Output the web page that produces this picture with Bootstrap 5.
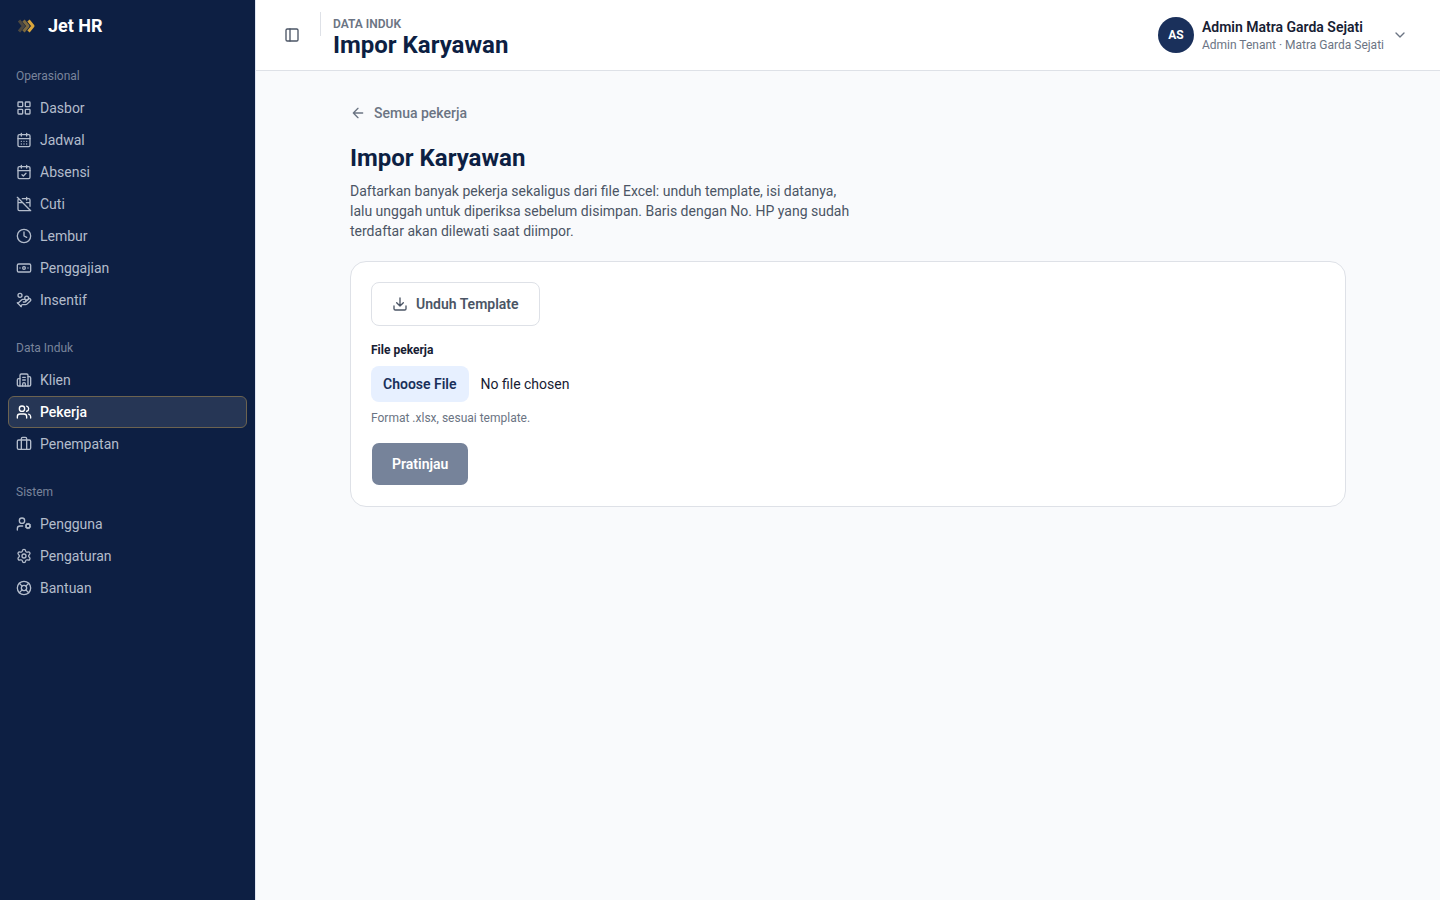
<!DOCTYPE html>
<html lang="id">
<head>
<meta charset="utf-8">
<meta name="viewport" content="width=device-width, initial-scale=1">
<title>Impor Karyawan · Jet HR</title>
<link href="https://cdn.jsdelivr.net/npm/bootstrap@5.3.0/dist/css/bootstrap.min.css" rel="stylesheet">
<style>
  :root {
    --navy: #0d1f43;
    --ink: #172033;
    --text: #4b5565;
    --muted: #6b7483;
    --line: #dee1e7;
  }
  body {
    font-family: Roboto, "Liberation Sans", sans-serif;
    font-size: 14px;
    line-height: 20px;
    color: var(--ink);
    background: #f9fafc;
  }
  a { text-decoration: none; }
  .ico {
    width: 16px;
    height: 16px;
    flex: none;
    fill: none;
    stroke: currentColor;
    stroke-width: 2;
    stroke-linecap: round;
    stroke-linejoin: round;
  }
  .text-12 { font-size: 12px; line-height: 16px; }
  .text-soft { color: var(--muted); }
  .page-title {
    font-size: 24px;
    line-height: 30px;
    font-weight: 700;
    color: var(--navy);
  }

  /* Sidebar */
  .sidebar {
    width: 256px;
    flex: none;
    background: var(--navy);
    border-right: 1px solid #dfe5f2;
  }
  .brand {
    height: 52px;
    padding: 0 16px;
    gap: 12px;
    font-size: 18px;
    font-weight: 700;
    color: #fff;
  }
  .brand svg { width: 20px; height: 20px; fill: none; stroke: #d9a63c; stroke-width: 3; stroke-linejoin: round; }
  .menu-group { padding: 8px; }
  .menu-title {
    height: 32px;
    padding: 0 8px;
    font-size: 12px;
    color: #79849b;
  }
  .menu-link {
    height: 32px;
    padding: 0 7px;
    gap: 8px;
    border: 1px solid transparent;
    border-radius: 6px;
    color: #b3bccb;
  }
  .menu-link:hover { color: #fff; }
  .menu-link.active {
    background: #263655;
    border-color: #6c6350;
    color: #fff;
    font-weight: 500;
  }

  /* Top bar */
  .topbar {
    min-height: 71px;
    padding: 12px 32px 12px 20px;
    background: #fff;
    border-bottom: 1px solid var(--line);
  }
  .toggle { width: 32px; height: 32px; color: var(--text); }
  .topbar-start { gap: 12px; }
  .rule { width: 1px; height: 24px; background: var(--line); }
  .eyebrow { font-size: 12px; line-height: 20px; font-weight: 600; color: var(--muted); }
  .topbar .page-title { line-height: 22px; }
  .avatar {
    width: 36px;
    height: 36px;
    background: #1a305b;
    color: #fff;
    font-size: 12px;
    font-weight: 700;
  }
  .account-name { font-size: 14px; line-height: 20px; font-weight: 600; color: var(--ink); }

  /* Content */
  .content { max-width: 1060px; padding: 32px; }
  .back-link { color: var(--muted); font-weight: 500; }
  .intro { max-width: 500px; margin-bottom: 20px; color: var(--text); }
  .content .page-title { margin: 20px 0 8px; }
  .panel {
    padding: 20px;
    gap: 16px;
    background: #fff;
    border: 1px solid var(--line);
    border-radius: 16px;
  }
  .btn-action {
    --bs-btn-padding-x: 20px;
    --bs-btn-padding-y: 11px;
    --bs-btn-font-size: 14px;
    --bs-btn-font-weight: 600;
    --bs-btn-line-height: 20px;
    --bs-btn-border-radius: 8px;
    background-clip: padding-box;
  }
  .btn-plain {
    --bs-btn-color: var(--text);
    --bs-btn-bg: #fff;
    --bs-btn-border-color: var(--line);
    --bs-btn-hover-color: var(--ink);
    --bs-btn-hover-bg: #f9fafc;
    --bs-btn-hover-border-color: var(--line);
  }
  .btn-navy {
    --bs-btn-disabled-color: #fff;
    --bs-btn-disabled-bg: #76839a;
    --bs-btn-disabled-border-color: transparent;
    --bs-btn-disabled-opacity: 1;
  }
  .picker { width: 100%; height: 36px; line-height: 36px; }
  .picker::file-selector-button {
    height: 36px;
    margin: 0 12px 0 0;
    padding: 0 12px;
    border: 0;
    border-radius: 8px;
    background: #e7f0ff;
    color: #1a305b;
    font-weight: 600;
  }
</style>
</head>
<body>
<div class="d-flex min-vh-100">
  <aside class="sidebar">
    <a href="#" class="brand d-flex align-items-center">
      <svg viewBox="0 0 20 20" aria-hidden="true">
        <path d="M3 4.500l4.500 5.500L3 15.500" opacity=".3"/>
        <path d="M7.500 4.500L12 10l-4.500 5.500" opacity=".55"/>
        <path d="M12.500 4.500L17 10l-4.500 5.500"/>
      </svg>
      <span>Jet HR</span>
    </a>
    <nav aria-label="Menu utama">
      <div class="menu-group">
        <div class="menu-title d-flex align-items-center">Operasional</div>
        <a href="#" class="menu-link d-flex align-items-center">
          <svg class="ico" viewBox="0 0 24 24"><rect width="7" height="7" x="3" y="3" rx="1"/><rect width="7" height="7" x="14" y="3" rx="1"/><rect width="7" height="7" x="14" y="14" rx="1"/><rect width="7" height="7" x="3" y="14" rx="1"/></svg>
          Dasbor</a>
        <a href="#" class="menu-link d-flex align-items-center">
          <svg class="ico" viewBox="0 0 24 24"><path d="M8 2v4M16 2v4"/><rect width="18" height="18" x="3" y="4" rx="2"/><path d="M3 10h18M8 14h.01M12 14h.01M16 14h.01M8 18h.01M12 18h.01M16 18h.01"/></svg>
          Jadwal</a>
        <a href="#" class="menu-link d-flex align-items-center">
          <svg class="ico" viewBox="0 0 24 24"><path d="M8 2v4M16 2v4"/><rect width="18" height="18" x="3" y="4" rx="2"/><path d="M3 10h18M9 16l2 2 4-4"/></svg>
          Absensi</a>
        <a href="#" class="menu-link d-flex align-items-center">
          <svg class="ico" viewBox="0 0 24 24"><path d="M4.2 4.2A2 2 0 0 0 3 6v14a2 2 0 0 0 2 2h14a2 2 0 0 0 1.82-1.18M21 15.5V6a2 2 0 0 0-2-2H9.5M16 2v4M3 10h7M21 10h-5.5M2 2l20 20"/></svg>
          Cuti</a>
        <a href="#" class="menu-link d-flex align-items-center">
          <svg class="ico" viewBox="0 0 24 24"><circle cx="12" cy="12" r="10"/><path d="M12 6v6l4 2"/></svg>
          Lembur</a>
        <a href="#" class="menu-link d-flex align-items-center">
          <svg class="ico" viewBox="0 0 24 24"><rect width="20" height="12" x="2" y="6" rx="2"/><circle cx="12" cy="12" r="2"/><path d="M6 12h.01M18 12h.01"/></svg>
          Penggajian</a>
        <a href="#" class="menu-link d-flex align-items-center">
          <svg class="ico" viewBox="0 0 24 24"><path d="M11 15h2a2 2 0 1 0 0-4h-3c-.6 0-1.1.2-1.4.6L3 17"/><path d="m7 21 1.6-1.4c.3-.4.8-.6 1.4-.6h4c1.1 0 2.1-.4 2.8-1.2l4.6-4.4a2 2 0 0 0-2.75-2.91l-4.2 3.9"/><path d="m2 16 6 6"/><circle cx="16" cy="9" r="2.9"/><circle cx="6" cy="5" r="3"/></svg>
          Insentif</a>
      </div>
      <div class="menu-group">
        <div class="menu-title d-flex align-items-center">Data Induk</div>
        <a href="#" class="menu-link d-flex align-items-center">
          <svg class="ico" viewBox="0 0 24 24"><path d="M10 12h4M10 8h4M14 21v-3a2 2 0 0 0-4 0v3"/><path d="M6 10H4a2 2 0 0 0-2 2v7a2 2 0 0 0 2 2h16a2 2 0 0 0 2-2V9a2 2 0 0 0-2-2h-2"/><path d="M6 21V5a2 2 0 0 1 2-2h8a2 2 0 0 1 2 2v16"/></svg>
          Klien</a>
        <a href="#" class="menu-link active d-flex align-items-center" aria-current="page">
          <svg class="ico" viewBox="0 0 24 24"><path d="M16 21v-2a4 4 0 0 0-4-4H6a4 4 0 0 0-4 4v2"/><circle cx="9" cy="7" r="4"/><path d="M22 21v-2a4 4 0 0 0-3-3.87M16 3.13a4 4 0 0 1 0 7.75"/></svg>
          Pekerja</a>
        <a href="#" class="menu-link d-flex align-items-center">
          <svg class="ico" viewBox="0 0 24 24"><path d="M16 20V4a2 2 0 0 0-2-2h-4a2 2 0 0 0-2 2v16"/><rect width="20" height="14" x="2" y="6" rx="2"/></svg>
          Penempatan</a>
      </div>
      <div class="menu-group">
        <div class="menu-title d-flex align-items-center">Sistem</div>
        <a href="#" class="menu-link d-flex align-items-center">
          <svg class="ico" viewBox="0 0 24 24"><path d="M10 15H6a4 4 0 0 0-4 4v2"/><circle cx="9" cy="7" r="4"/><circle cx="18" cy="15" r="3"/><path d="m14.3 16.6 1-.4M15.2 13.9l-.9-.3M16.6 18.7l.3-.9M16.8 12.3l-.4-1M19.1 12.2l.3-.9M19.6 18.7l-.4-1M20.7 13.8l1-.4M21.7 16.4l-.9-.3"/></svg>
          Pengguna</a>
        <a href="#" class="menu-link d-flex align-items-center">
          <svg class="ico" viewBox="0 0 24 24"><path d="M9.671 4.136a2.34 2.34 0 0 1 4.659 0 2.34 2.34 0 0 0 3.319 1.915 2.34 2.34 0 0 1 2.33 4.033 2.34 2.34 0 0 0 0 3.831 2.34 2.34 0 0 1-2.33 4.033 2.34 2.34 0 0 0-3.319 1.915 2.34 2.34 0 0 1-4.659 0 2.34 2.34 0 0 0-3.32-1.915 2.34 2.34 0 0 1-2.33-4.033 2.34 2.34 0 0 0 0-3.831A2.34 2.34 0 0 1 6.35 6.051a2.34 2.34 0 0 0 3.319-1.915"/><circle cx="12" cy="12" r="3"/></svg>
          Pengaturan</a>
        <a href="#" class="menu-link d-flex align-items-center">
          <svg class="ico" viewBox="0 0 24 24"><circle cx="12" cy="12" r="10"/><path d="m4.93 4.93 4.24 4.24M14.83 9.17l4.24-4.24M14.83 14.83l4.24 4.24M9.17 14.83l-4.24 4.24"/><circle cx="12" cy="12" r="4"/></svg>
          Bantuan</a>
      </div>
    </nav>
  </aside>

  <div class="flex-grow-1">
    <header class="topbar d-flex align-items-center justify-content-between">
      <div class="topbar-start d-flex align-items-center align-self-stretch">
        <button type="button" class="toggle btn border-0 p-0 d-flex align-items-center justify-content-center" aria-label="Buka atau tutup menu">
          <svg class="ico" viewBox="0 0 24 24"><rect width="18" height="18" x="3" y="3" rx="2"/><path d="M9 3v18"/></svg>
        </button>
        <div class="rule align-self-start"></div>
        <div>
          <div class="eyebrow">DATA INDUK</div>
          <div class="page-title">Impor Karyawan</div>
        </div>
      </div>
      <button type="button" class="btn border-0 p-0 d-flex align-items-center gap-2 text-start">
        <span class="avatar rounded-circle d-flex align-items-center justify-content-center">AS</span>
        <span class="d-flex flex-column">
          <span class="account-name">Admin Matra Garda Sejati</span>
          <span class="text-12 text-soft">Admin Tenant · Matra Garda Sejati</span>
        </span>
        <svg class="ico text-soft" viewBox="0 0 24 24"><path d="m6 9 6 6 6-6"/></svg>
      </button>
    </header>

    <main class="content mx-auto">
      <a href="#" class="back-link d-flex align-items-center gap-2">
        <svg class="ico" viewBox="0 0 24 24"><path d="m12 19-7-7 7-7M19 12H5"/></svg>
        Semua pekerja</a>
      <h1 class="page-title">Impor Karyawan</h1>
      <p class="intro">Daftarkan banyak pekerja sekaligus dari file Excel: unduh template, isi datanya, lalu unggah untuk diperiksa sebelum disimpan. Baris dengan No. HP yang sudah terdaftar akan dilewati saat diimpor.</p>
      <form class="panel d-flex flex-column align-items-start">
        <button type="button" class="btn btn-action btn-plain d-flex align-items-center gap-2">
          <svg class="ico" viewBox="0 0 24 24"><path d="M12 15V3M21 15v4a2 2 0 0 1-2 2H5a2 2 0 0 1-2-2v-4M7 10l5 5 5-5"/></svg>
          Unduh Template</button>
        <div class="d-flex flex-column gap-2 w-100">
          <label for="workerFile" class="text-12 fw-bold">File pekerja</label>
          <input type="file" id="workerFile" class="picker" accept=".xlsx" aria-describedby="workerHelp">
          <div id="workerHelp" class="text-12 text-soft">Format .xlsx, sesuai template.</div>
        </div>
        <button type="submit" class="btn btn-action btn-navy" disabled>Pratinjau</button>
      </form>
    </main>
  </div>
</div>
<script src="https://cdn.jsdelivr.net/npm/bootstrap@5.3.0/dist/js/bootstrap.bundle.min.js"></script>
</body>
</html>
